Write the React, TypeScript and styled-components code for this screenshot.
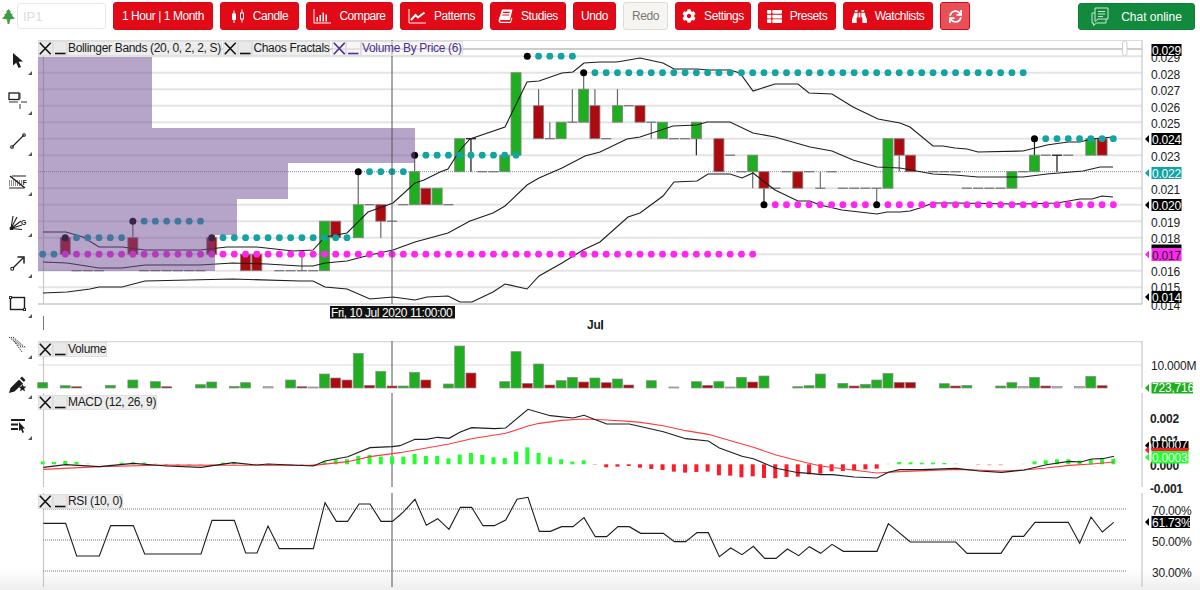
import React from "react";
import styled, { createGlobalStyle } from "styled-components";
import { FaBinoculars, FaCog, FaSync, FaThList } from "react-icons/fa";

const GlobalStyle = createGlobalStyle`
  html, body {
    margin: 0;
    padding: 0;
    height: 590px;
    overflow: hidden;
    font-family: "Liberation Sans", Arial, sans-serif;
    background: linear-gradient(to bottom, #fff 568px, #eeeeee 590px);
  }
`;

const Page = styled.div`
  width: 1200px;
  height: 590px;
  display: flex;
  flex-direction: column;
`;

const Toolbar = styled.div`
  height: 40px;
  box-sizing: border-box;
  padding: 2px 5px 0 2px;
  display: flex;
  align-items: flex-start;
  gap: 7px;
`;

const Logo = styled.svg`
  width: 13px;
  height: 15px;
  margin: 7px -5px 0 0;
`;

const SymbolInput = styled.input`
  width: 89px;
  height: 26px;
  margin-top: 1px;
  box-sizing: border-box;
  border: 1px solid #e9e9e9;
  border-radius: 3px;
  padding: 0 5px;
  font: 13px "Liberation Sans", Arial, sans-serif;
  outline: none;
  &::placeholder {
    color: #dcdcdc;
  }
`;

const Button = styled.button<{ $w: number; $off?: boolean; $soft?: boolean }>`
  width: ${(p) => p.$w}px;
  height: 28px;
  box-sizing: border-box;
  padding: 0;
  border-radius: 3px;
  border: 1px solid ${(p) => (p.$off ? "#dcdcd8" : "#d40a16")};
  background: ${(p) => (p.$off ? "#f6f5f1" : p.$soft ? "#ea5058" : "#e20a16")};
  color: ${(p) => (p.$off ? "#777" : "#fff")};
  font: 12px "Liberation Sans", Arial, sans-serif;
  letter-spacing: -0.45px;
  display: flex;
  align-items: center;
  justify-content: center;
  gap: 8px;
  svg {
    flex: none;
  }
`;

const ChatButton = styled.button`
  width: 117px;
  height: 27px;
  margin-left: auto;
  margin-top: 1px;
  box-sizing: border-box;
  padding: 0;
  border-radius: 3px;
  border: 1px solid #0f7f38;
  background: #118a3e;
  color: #fff;
  font: 12px "Liberation Sans", Arial, sans-serif;
  display: flex;
  align-items: center;
  justify-content: center;
  gap: 9px;
`;

const Body = styled.div`
  display: flex;
  flex: 1;
`;

const Rail = styled.div`
  width: 38px;
  flex: none;
  display: flex;
  flex-direction: column;
`;

const Tool = styled.div`
  height: 40.6px;
  box-sizing: border-box;
  padding-right: 3px;
  position: relative;
  display: flex;
  align-items: center;
  justify-content: center;
  color: #1c1c1c;
`;

const Corner = styled.span`
  position: absolute;
  right: 6px;
  bottom: 6px;
  width: 0;
  height: 0;
  border-left: 4px solid transparent;
  border-bottom: 4px solid #555;
`;

const Charts = styled.div`
  flex: 1;
  display: flex;
  flex-direction: column;
`;

const Panel = styled.div<{ $h: number }>`
  height: ${(p) => p.$h}px;
  position: relative;
`;

const ChartSvg = styled.svg`
  display: block;
  overflow: visible;
`;

const Legend = styled.div<{ $top: number }>`
  position: absolute;
  left: 0;
  top: ${(p) => p.$top}px;
  display: flex;
  height: 15px;
`;

const LegendButton = styled.span<{ $faint?: boolean }>`
  width: 14.5px;
  height: 15px;
  box-sizing: border-box;
  border: 1px solid #dedede;
  background: ${(p) => (p.$faint ? "rgba(240,240,240,.6)" : "#e9e9e9")};
  display: block;
  svg {
    display: block;
  }
`;

const LegendLabel = styled.span<{ $purple?: boolean }>`
  height: 15px;
  box-sizing: border-box;
  border: 1px solid #e0e0e0;
  padding: 0;
  background: ${(p) => (p.$purple ? "rgba(240,240,240,.45)" : "rgba(234,234,234,.85)")};
  color: ${(p) => (p.$purple ? "#4e2f8f" : "#1a1a1a")};
  font-size: 12px;
  line-height: 13px;
  letter-spacing: -0.33px;
  white-space: nowrap;
  margin-right: 1.5px;
`;

const AxisText = styled.text<{ $bold?: boolean }>`
  font-family: "Liberation Sans", Arial, sans-serif;
  font-size: 12px;
  font-weight: ${(p) => (p.$bold ? 700 : 400)};
  letter-spacing: -0.2px;
  fill: #222;
`;

const FlagText = styled.text<{ $tight?: boolean; $dark?: boolean }>`
  font-family: "Liberation Sans", Arial, sans-serif;
  font-size: 12px;
  letter-spacing: ${(p) => (p.$tight ? "-0.42px" : "-0.2px")};
  fill: ${(p) => (p.$dark ? "#222" : "#fff")};
`;

const X0 = 42.7;
const STEP = 11.27;
const cx = (i: number) => X0 + STEP * i;
const py = (t: number) => 72.7 + (28 - t) * 16.5;
const range = (a: number, b: number) => Array.from({ length: b - a + 1 }, (_, k) => a + k);
const pts = (list: number[][]) => list.map((p) => p.join(",")).join(" ");
const zoomed = (ox: number, oy: number, list: number[][]) =>
  list.map(([a, b]) => [ox + a / 3, oy + b / 3]);

const GREEN = "#1fae1f";
const RED = "#ad0a10";
const TEAL = "#12a3a3";
const MAGENTA = "#ff26f0";
const GRID = "#e4e4e4";
const EDGE = "#c8c8c8";

type Candle = { i: number; top: number; bot: number; hi?: number; lo?: number; dark?: boolean };

const greens: Candle[] = [
  { i: 25, top: 19, bot: 16 },
  { i: 28, top: 20, bot: 18, hi: 22 },
  { i: 33, top: 22, bot: 20, hi: 23 },
  { i: 35, top: 21, bot: 20 },
  { i: 37, top: 24, bot: 22 },
  { i: 41, top: 23, bot: 22 },
  { i: 42, top: 28, bot: 23 },
  { i: 46, top: 25, bot: 24 },
  { i: 48, top: 27, bot: 25, hi: 28 },
  { i: 51, top: 26, bot: 25, hi: 27 },
  { i: 55, top: 25, bot: 24 },
  { i: 58, top: 25, bot: 24, lo: 23, dark: true },
  { i: 63, top: 23, bot: 22, lo: 21 },
  { i: 75, top: 24, bot: 21 },
  { i: 86, top: 22, bot: 21 },
  { i: 88, top: 23, bot: 22, hi: 24, dark: true },
  { i: 93, top: 24, bot: 23 },
];

const reds: Candle[] = [
  { i: 2, top: 18, bot: 17 },
  { i: 8, top: 18, bot: 17, hi: 19 },
  { i: 15, top: 18, bot: 17 },
  { i: 18, top: 17, bot: 16 },
  { i: 19, top: 17, bot: 16 },
  { i: 26, top: 19, bot: 18 },
  { i: 30, top: 20, bot: 19, lo: 18 },
  { i: 34, top: 21, bot: 20 },
  { i: 44, top: 26, bot: 24, hi: 27 },
  { i: 49, top: 26, bot: 24, hi: 27 },
  { i: 53, top: 26, bot: 25 },
  { i: 60, top: 24, bot: 22 },
  { i: 64, top: 22, bot: 21, lo: 20, dark: true },
  { i: 67, top: 22, bot: 21 },
  { i: 76, top: 24, bot: 23, lo: 22 },
  { i: 77, top: 23, bot: 22 },
  { i: 94, top: 24, bot: 23 },
];

// [index, level, wick end level]
const dashes: number[][] = [
  [3, 16], [4, 16], [5, 16], [9, 16], [10, 16], [11, 16], [12, 16], [13, 16], [14, 16],
  [21, 16], [22, 16], [23, 16, 17], [24, 16], [29, 20], [31, 19], [32, 20], [36, 20],
  [38, 24, 22], [39, 22], [40, 22], [45, 24, 25], [47, 25, 27], [50, 24], [52, 26],
  [54, 25, 24], [56, 24], [57, 24], [61, 23], [62, 22], [65, 21], [66, 22], [68, 22],
  [69, 21, 22], [70, 22], [71, 21], [72, 21], [73, 21], [74, 21, 20], [79, 22], [80, 22],
  [81, 22], [82, 21], [83, 21], [84, 21], [85, 21], [87, 22], [89, 23], [90, 23, 22], [91, 23],
];

const tealDots: [number, number, number][] = [
  [0, 1, 17], [3, 7, 18], [9, 14, 19], [16, 27, 18], [29, 32, 22], [34, 42, 23],
  [44, 47, 29], [49, 87, 28], [89, 95, 24],
];
const magentaDots: [number, number, number][] = [
  [2, 63, 17], [65, 73, 20], [75, 95, 20],
];
const blackDots = [
  [2, 18], [8, 19], [15, 18], [28, 22], [33, 23], [43, 29], [48, 28], [88, 24], [64, 20], [74, 20],
];

const upperBand = [
  [43, 232], [54, 232], [66, 232], [83, 237], [99, 247], [122, 247], [145, 250], [200, 250],
  [227, 247], [257, 247], [293, 251], [313, 250], [325, 237], [347, 233], [368, 212], [393, 203],
  [415, 183], [424, 180], [440, 172], [448, 169], [460, 150], [470, 139], [505, 127], [527, 82],
  [539, 81], [562, 73], [573, 72], [584, 63], [600, 62], [617, 62], [640, 58], [663, 63], [674, 69],
  [697, 69], [708, 70], [730, 70], [740, 73], [753, 91], [775, 84], [798, 84], [809, 93], [832, 94],
  [853, 107], [878, 119], [900, 123], [910, 127], [933, 146], [943, 146], [955, 148], [967, 149],
  [978, 152], [1023, 151], [1047, 145], [1068, 142], [1080, 142], [1091, 139], [1113, 137],
];
const middleBand = [
  [43, 262], [67, 263], [99, 268], [122, 268], [145, 265], [200, 265], [233, 263], [267, 264],
  [300, 266], [313, 266], [325, 263], [347, 261], [370, 255], [393, 250], [415, 242], [448, 233],
  [470, 221], [493, 213], [505, 206], [527, 185], [539, 178], [562, 168], [585, 156], [600, 152],
  [627, 139], [640, 137], [673, 126], [697, 125], [707, 122], [730, 122], [753, 133], [775, 137],
  [810, 147], [832, 151], [853, 160], [877, 167], [900, 168], [933, 174], [955, 175], [978, 177],
  [1023, 177], [1047, 174], [1083, 171], [1100, 167], [1113, 167],
];
const lowerBand = [
  [43, 293], [67, 292], [90, 289], [99, 287], [122, 287], [145, 281], [233, 279], [300, 281],
  [313, 281], [325, 287], [347, 289], [370, 299], [393, 297], [415, 300], [427, 297], [448, 296],
  [460, 302], [472, 302], [493, 292], [505, 284], [527, 289], [539, 276], [562, 263], [583, 250],
  [600, 242], [628, 217], [640, 213], [663, 196], [674, 182], [697, 181], [708, 174], [730, 174],
  [742, 178], [753, 173], [775, 190], [798, 201], [810, 201], [820, 205], [842, 210], [877, 214],
  [887, 212], [900, 212], [910, 211], [920, 208], [933, 203], [955, 203], [1023, 204], [1057, 203],
  [1080, 199], [1092, 199], [1102, 196], [1113, 197],
];

const axisLevels = [
  [0.029, 62], [0.028, 79], [0.027, 95], [0.026, 112], [0.025, 128], [0.023, 161], [0.021, 194],
  [0.019, 227], [0.018, 243], [0.016, 276], [0.015, 292], [0.014, 310],
];

function Flag({ y, label, bg, h = 12, width = 30, tip = true, dark }: {
  y: number; label: string; bg: string; h?: number; width?: number; tip?: boolean; dark?: boolean;
}) {
  return (
    <g>
      {tip && <polygon points={`1145,${y + h / 2} 1149,${y + h / 2 - 4} 1149,${y + h / 2 + 4}`} fill={bg} />}
      <rect x={1151.5} y={y} width={width} height={h} fill={bg} />
      <FlagText x={1152} y={y + h - 1.5} $dark={dark}>{label}</FlagText>
    </g>
  );
}

function MainChart() {
  const candle = (c: Candle, fill: string) => (
    <g key={c.i}>
      {c.hi && <line x1={cx(c.i)} x2={cx(c.i)} y1={py(c.hi)} y2={py(c.top)} stroke={c.dark ? "#222" : "#666"} strokeWidth="1.2" />}
      {c.lo && <line x1={cx(c.i)} x2={cx(c.i)} y1={py(c.bot)} y2={py(c.lo)} stroke={c.dark ? "#222" : "#666"} strokeWidth="1.2" />}
      <rect x={cx(c.i) - 5} y={py(c.top)} width={10} height={py(c.bot) - py(c.top)} fill={fill} stroke="#808080" strokeWidth="0.8" />
    </g>
  );
  return (
    <ChartSvg width={1162} height={301} viewBox="38 40 1162 301">
      <line x1={38} x2={1142} y1={40.5} y2={40.5} stroke="#dcdcdc" />
      <line x1={38} x2={1142} y1={49} y2={49} stroke="#bdbdbd" strokeWidth="1.6" />
      {range(15, 29).filter((t) => t !== 22).map((t) => (
        <line key={t} x1={38} x2={1142} y1={py(t)} y2={py(t)} stroke={GRID} strokeWidth="2" />
      ))}
      <line x1={38} x2={1142} y1={py(22)} y2={py(22)} stroke="#8a8a8a" strokeDasharray="1 1" />
      <line x1={38} x2={1142} y1={304} y2={304} stroke={EDGE} strokeWidth="1.5" />
      <line x1={1142} x2={1142} y1={40} y2={304} stroke={EDGE} strokeWidth="1.2" />
      <line x1={43.5} x2={43.5} y1={56} y2={304} stroke={EDGE} strokeWidth="1.2" />
      <rect x={1122.5} y={41} width={4.5} height={14.5} rx={2} fill="#fff" stroke="#cfcfcf" />

      {dashes.map(([i, t, w]) => (
        <g key={i} stroke={i === 38 || i === 90 ? "#111" : "#707070"} strokeWidth="1.2">
          <line x1={cx(i) - 5} x2={cx(i) + 5} y1={py(t)} y2={py(t)} />
          {w && <line x1={cx(i)} x2={cx(i)} y1={py(t)} y2={py(w)} />}
        </g>
      ))}
      {greens.map((c) => candle(c, GREEN))}
      {reds.map((c) => candle(c, RED))}

      {[upperBand, middleBand, lowerBand].map((b, k) => (
        <polyline key={k} points={pts(b)} fill="none" stroke="#1d1d1d" strokeWidth="1.1" />
      ))}

      {tealDots.flatMap(([a, b, t]) =>
        range(a, b).map((i) => <circle key={`t${t}${i}`} cx={cx(i)} cy={py(t)} r={3.4} fill={TEAL} />)
      )}
      {magentaDots.flatMap(([a, b, t]) =>
        range(a, b).map((i) => <circle key={`m${t}${i}`} cx={cx(i)} cy={py(t)} r={3.4} fill={MAGENTA} />)
      )}
      {blackDots.map(([i, t]) => <circle key={i} cx={cx(i)} cy={py(t)} r={3.5} fill="#000" />)}

      <polygon
        points="38,57 152,57 152,128 415,128 415,163 288,163 288,199 237,199 237,235 215,235 215,271 38,271"
        fill="#6f4b93"
        opacity="0.5"
      />
      <line x1={392} x2={392} y1={40} y2={304} stroke="#555" />

      {axisLevels.map(([v, y]) => (
        <AxisText key={v} x={1151} y={y}>{v.toFixed(3)}</AxisText>
      ))}
      <Flag y={44} label="0.029" bg="#000" tip={false} />
      <Flag y={133} label="0.024" bg="#000" />
      <Flag y={167} label="0.022" bg={TEAL} />
      <Flag y={199} label="0.020" bg="#000" />
      <rect x={1151.5} y={244.5} width={30} height={4} fill="#000" />
      <Flag y={248} label="0.017" bg={MAGENTA} h={13} dark />
      <Flag y={291} label="0.014" bg="#000" />

      <rect x={330} y={306} width={125} height={12.5} fill="#111" />
      <FlagText x={331} y={316.5} $tight>Fri, 10 Jul 2020 11:00:00</FlagText>
      <line x1={43.5} x2={43.5} y1={316} y2={330} stroke="#777" />
      <line x1={602} x2={602} y1={320} y2={330} stroke="#333" />
      <AxisText x={587} y={329} $bold>Jul</AxisText>
    </ChartSvg>
  );
}

// [index, top in 3x crop px from y=330, kind]
const volumeBars: [number, number, string][] = [
  [0, 158, "g"], [2, 167, "g"], [3, 170, "r"], [6, 166, "g"], [8, 150, "g"], [10, 155, "g"], [11, 170, "r"],
  [14, 164, "g"], [15, 156, "g"], [17, 169, "g"], [18, 158, "g"], [20, 170, "l"], [22, 150, "g"], [23, 170, "r"],
  [24, 171, "l"], [25, 132, "g"], [26, 144, "r"], [27, 150, "r"], [28, 70, "g"], [29, 166, "r"], [30, 124, "g"],
  [31, 168, "r"], [32, 168, "g"], [33, 127, "g"], [34, 150, "r"], [36, 162, "g"], [37, 48, "g"], [38, 129, "r"],
  [41, 155, "g"], [42, 65, "g"], [43, 160, "r"], [44, 102, "g"], [45, 165, "r"], [46, 152, "g"], [47, 142, "g"],
  [48, 156, "r"], [49, 144, "g"], [50, 158, "r"], [51, 147, "g"], [52, 165, "r"], [54, 152, "g"], [56, 171, "l"],
  [58, 155, "g"], [59, 166, "r"], [60, 155, "g"], [61, 171, "l"], [62, 142, "g"], [63, 156, "r"], [64, 138, "g"],
  [67, 170, "g"], [68, 167, "g"], [69, 132, "g"], [71, 160, "g"], [72, 168, "r"], [73, 163, "g"], [74, 150, "g"],
  [75, 130, "g"], [76, 157, "r"], [77, 157, "r"], [80, 161, "g"], [81, 168, "r"], [82, 166, "g"], [85, 168, "g"],
  [86, 158, "g"], [87, 169, "l"], [88, 142, "g"], [89, 168, "r"], [90, 169, "l"], [92, 169, "l"], [93, 139, "g"],
  [94, 167, "r"],
];

function VolumeChart() {
  const fill: Record<string, string> = { g: GREEN, r: RED, l: "#d0b8b8" };
  return (
    <ChartSvg width={1162} height={52} viewBox="38 341 1162 52">
      <line x1={38} x2={1142} y1={341.7} y2={341.7} stroke="#d8d8d8" strokeWidth="1.2" />
      <line x1={38} x2={1142} y1={365} y2={365} stroke="#dcdcdc" strokeWidth="1.2" />
      <line x1={43.5} x2={43.5} y1={341} y2={388} stroke={EDGE} strokeWidth="1.2" />
      <line x1={392} x2={392} y1={341} y2={388} stroke="#555" />
      <line x1={1142} x2={1142} y1={341} y2={388} stroke={EDGE} strokeWidth="1.2" />
      {volumeBars.map(([i, t, k]) => (
        <rect
          key={i}
          x={cx(i) - 5}
          y={330 + t / 3}
          width={10}
          height={388 - (330 + t / 3)}
          fill={fill[k]}
          stroke="#8d8d8d"
          strokeWidth="0.7"
        />
      ))}
      <AxisText x={1151} y={370}>10.000M</AxisText>
      <Flag y={382.5} label="723,716" bg={GREEN} h={11} width={41.5} />
    </ChartSvg>
  );
}

const histogram = [
  8, 7, 10, 7, 3, 1, 1, 5, 6, 5, 3, -3, -3, -3, -3, -2, 5, 7, 3, 2, 2, 1, -2, -2, -3, 8, 15, 15, 25, 28, 23, 23,
  23, 31, 25, 25, 18, 29, 34, 28, 21, 19, 38, 51, 34, 21, 15, 8, 12, -2, -9, -7, -5, -10, -14, -17, -22, -25, -23,
  -22, -33, -34, -39, -36, -41, -42, -38, -37, -30, -28, -21, -20, -18, -15, -13, 2, 7, 6, 5, 5, 4, 3, 0, -2, -3,
  -3, 0, 2, 9, 12, 15, 15, 11, 15, 15, 17,
];

const macdLine = [
  ...zoomed(0, 330, [[130, 412], [197, 404], [298, 410], [400, 400], [500, 408], [603, 412], [700, 398], [770, 405], [805, 402], [940, 408], [975, 393], [1043, 380], [1110, 353], [1177, 350]]),
  ...zoomed(400, 330, [[0, 347], [45, 328], [79, 328], [113, 322], [147, 325], [181, 306], [215, 293], [283, 296], [317, 294], [384, 238], [451, 257], [519, 264], [552, 256], [620, 282], [688, 282], [790, 305], [857, 326], [925, 333], [958, 354], [1026, 379], [1060, 386], [1128, 415], [1195, 428]]),
  ...zoomed(800, 330, [[30, 430], [63, 434], [97, 434], [163, 441], [231, 444], [265, 427], [299, 419], [367, 419], [469, 415], [537, 423], [605, 427], [672, 420], [739, 404], [807, 394], [842, 396], [875, 387], [908, 386], [942, 379]]),
];
const signalLine = [
  ...zoomed(0, 330, [[130, 418], [298, 410], [500, 405], [940, 406], [1043, 395], [1110, 380]]),
  ...zoomed(400, 330, [[0, 368], [147, 342], [215, 326], [317, 310], [384, 288], [418, 280], [485, 271], [552, 267], [620, 270], [688, 274], [722, 277], [790, 287], [857, 302], [925, 313], [992, 332], [1060, 352], [1128, 375], [1195, 392]]),
  ...zoomed(800, 330, [[62, 408], [231, 429], [299, 425], [469, 418], [605, 423], [672, 420], [739, 414], [807, 406], [875, 402], [942, 396]]),
];

function MacdChart() {
  const base = 464.3;
  return (
    <ChartSvg width={1162} height={97} viewBox="38 393 1162 97">
      <line x1={43.5} x2={43.5} y1={393} y2={487} stroke={EDGE} strokeWidth="1.2" />
      <line x1={392} x2={392} y1={393} y2={487} stroke="#555" />
      <line x1={1142} x2={1142} y1={393} y2={487} stroke={EDGE} strokeWidth="1.2" />
      {histogram.map((v, i) =>
        v === 0 ? null : (
          <rect
            key={i}
            x={cx(i) - 2}
            y={v > 0 ? base - v / 3 : base}
            width={4}
            height={Math.abs(v) / 3}
            fill={v > 0 ? "#22ff2e" : "#ff1a2a"}
            opacity={Math.abs(v) <= 3 ? 0.45 : 1}
          />
        )
      )}
      <polyline points={pts(signalLine)} fill="none" stroke="#ff3b3b" strokeWidth="1.1" />
      <polyline points={pts(macdLine)} fill="none" stroke="#1d1d1d" strokeWidth="1.1" />

      <AxisText x={1150} y={423} $bold>0.002</AxisText>
      <AxisText x={1150} y={470} $bold>0.000</AxisText>
      <AxisText x={1150} y={493} $bold>-0.001</AxisText>
      <AxisText x={1150} y={445} $bold>0.001</AxisText>
      <Flag y={441} label="0.0007" bg="#000" h={9} width={37} />
      <rect x={1151.5} y={448} width={37} height={3.5} fill="#ff1a2a" />
      <polygon points="1145,450 1149,446 1149,454" fill="#ff1a2a" />
      <Flag y={451} label="0.0003" bg="#22ff2e" h={12.5} width={37} />
    </ChartSvg>
  );
}

const rsiLine = [
  ...zoomed(0, 330, [[130, 580], [197, 580], [230, 678], [298, 678], [332, 587], [400, 587], [434, 672], [603, 672], [636, 571], [703, 571], [737, 669], [771, 669], [804, 588], [838, 656], [940, 656], [975, 518], [1009, 574], [1043, 574], [1077, 522], [1110, 522], [1143, 574], [1177, 574]]),
  ...zoomed(400, 330, [[0, 555], [11, 545], [45, 508], [79, 586], [113, 566], [147, 598], [181, 532], [215, 532], [249, 587], [283, 587], [317, 570], [351, 508], [384, 502], [418, 604], [451, 604], [485, 590], [519, 590], [552, 563], [586, 620], [620, 620], [654, 590], [688, 590], [722, 610], [790, 610], [823, 635], [857, 635], [891, 608], [925, 608], [958, 680], [992, 654], [1026, 674], [1060, 649], [1094, 685], [1128, 685], [1162, 657], [1196, 677]]),
  ...zoomed(800, 330, [[28, 650], [62, 670], [96, 643], [130, 664], [231, 664], [265, 581], [331, 636], [467, 636], [501, 670], [603, 670], [637, 619], [671, 619], [705, 577], [805, 577], [839, 640], [873, 561], [907, 606], [941, 577]]),
];

function RsiChart() {
  return (
    <ChartSvg width={1162} height={100} viewBox="38 490 1162 100">
      <line x1={43.5} x2={43.5} y1={493} y2={587} stroke={EDGE} strokeWidth="1.2" />
      <line x1={392} x2={392} y1={493} y2={587} stroke="#555" />
      <line x1={1142} x2={1142} y1={493} y2={587} stroke={EDGE} strokeWidth="1.2" />
      {[509, 540, 571].map((y) => (
        <line key={y} x1={43} x2={1126} y1={y} y2={y} stroke="#777" strokeDasharray="1 1" />
      ))}
      <polyline points={pts(rsiLine)} fill="none" stroke="#1d1d1d" strokeWidth="1.1" />
      <AxisText x={1152} y={515}>70.00%</AxisText>
      <AxisText x={1152} y={546}>50.00%</AxisText>
      <AxisText x={1152} y={577}>30.00%</AxisText>
      <Flag y={516} label="61.73%" bg="#000" width={38.5} />
    </ChartSvg>
  );
}

function CloseGlyph({ color }: { color: string }) {
  return (
    <svg width="12.5" height="13" viewBox="0 0 12.5 13">
      <path d="M0.8 0.8 L11.7 12.2 M11.7 0.8 L0.8 12.2" stroke={color} strokeWidth="1.6" />
    </svg>
  );
}

function MinGlyph({ color }: { color: string }) {
  return (
    <svg width="12.5" height="13" viewBox="0 0 12.5 13">
      <path d="M1 11.5 H11.5" stroke={color} strokeWidth="1.6" />
    </svg>
  );
}

function LegendItem({ label, purple }: { label: string; purple?: boolean }) {
  const color = purple ? "#4e2f8f" : "#111";
  return (
    <>
      <LegendButton $faint={purple}><CloseGlyph color={color} /></LegendButton>
      <LegendButton $faint={purple}><MinGlyph color={color} /></LegendButton>
      <LegendLabel $purple={purple}>{label}</LegendLabel>
    </>
  );
}

const icon = { fill: "none", stroke: "currentColor", strokeWidth: 1.1 };

const toolIcons = [
  <svg key="a" width="16" height="17" viewBox="0 0 16 17"><path d="M3 1 L3 13.6 L6.2 10.8 L8.6 16 L11 15 L8.6 9.8 L13 9.4 Z" fill="currentColor" /></svg>,
  <svg key="b" width="20" height="18" viewBox="0 0 20 18" {...icon}><rect x="1" y="1" width="10" height="6.5" strokeWidth="1.3" /><path d="M1 10 H10 M13 10 H19 M12 1 V7 M12 12 V17" strokeWidth="0.9" /></svg>,
  <svg key="c" width="16" height="16" viewBox="0 0 16 16" {...icon}><path d="M2.5 13.5 L13.5 2.5" /><circle cx="2" cy="14" r="1.3" /><circle cx="14" cy="2" r="1.3" /></svg>,
  <svg key="d" width="20" height="14" viewBox="0 0 20 14" {...icon}><path d="M4 1 H18 M1 13 H16" /><path d="M1 6 H14 M1 8 H14 M1 10 H14" strokeDasharray="1 1" /><path d="M2 1 L17 13" strokeWidth="1.5" /><text x="14.5" y="10" fontSize="7" fontWeight="700" fill="currentColor" stroke="none" fontFamily="Liberation Sans">F</text></svg>,
  <svg key="e" width="18" height="15" viewBox="0 0 18 15" {...icon}><path d="M2 13.5 L4 1 M2 13.5 L8 2 M2 13.5 L12 6 M2 13.5 L13 10 M2 13.5 L13 14.5" /><circle cx="2.5" cy="13.5" r="1.4" fill="currentColor" /><text x="12" y="10" fontSize="7" fontWeight="700" fill="currentColor" stroke="none" fontFamily="Liberation Sans">G</text></svg>,
  <svg key="f" width="15" height="15" viewBox="0 0 15 15" {...icon}><path d="M3 12 L13.5 1.5" strokeWidth="1.3" /><path d="M7.5 1 H14 V7.5" strokeWidth="1.5" /><circle cx="2.2" cy="12.8" r="1.5" /></svg>,
  <svg key="g" width="17" height="15" viewBox="0 0 17 15" {...icon}><rect x="1.5" y="1.5" width="14" height="12" strokeWidth="1.4" /><circle cx="1.5" cy="1.5" r="1.2" fill="#fff" /><circle cx="15.5" cy="13.5" r="1.2" fill="#fff" /></svg>,
  <svg key="h" width="19" height="17" viewBox="0 0 19 17" {...icon}><path d="M1 1 L14 12 M3 1 L16 12 M5 1 L18 12 M6 5 L14 16" strokeDasharray="1.4 1" strokeWidth="0.9" /></svg>,
  <svg key="i" width="20" height="18" viewBox="0 0 20 18" fill="currentColor"><path d="M1 17 L2.5 12 L11 3.5 L15 7.5 L6.5 15.5 Z M12 2.5 L14 0.6 L17.4 4 L16 6 Z" /><path d="M14.5 8 L15.6 10.6 L18.4 10.8 L16.2 12.6 L17 15.4 L14.5 13.8 L12 15.4 L12.8 12.6 L10.6 10.8 L13.4 10.6 Z" /></svg>,
  <svg key="j" width="16" height="15" viewBox="0 0 16 15" fill="currentColor"><path d="M1 1 H15 V3 H1 Z M1 5.5 H8 V7.5 H1 Z M1 10 H8 V12 H1 Z" /><path d="M9 4 L9 13 L11 11.4 L12.5 15 L14 14.2 L12.6 10.8 L15 10.4 Z" /></svg>,
];

export default function App() {
  return (
    <Page>
      <GlobalStyle />
      <Toolbar>
        <Logo viewBox="0 0 13 15">
          <path d="M6.5 0 L9 3 L8 3.4 L11 6 L9.8 6.4 L13 9.6 L8 10.4 L7.4 15 L5.6 15 L5 10.4 L0 9.6 L3.2 6.4 L2 6 L5 3.4 L4 3 Z" fill="#3f9d46" />
        </Logo>
        <SymbolInput placeholder="IP1" />
        <Button $w={100}>1 Hour | 1 Month</Button>
        <Button $w={79}>
          <svg width="14" height="15" viewBox="0 0 14 15" fill="#fff">
            <path d="M2.5 1.5 H3.5 V4.5 H5 V11 H3.5 V14 H2.5 V11 H1 V4.5 H2.5 Z" />
            <path d="M10.5 0.5 H11.5 V3.5 H13 V10.5 H11.5 V13.5 H10.5 V10.5 H9 V3.5 H10.5 Z M10 4.5 V9.5 H12 V4.5 Z" />
          </svg>
          Candle
        </Button>
        <Button $w={87}>
          <svg width="18" height="15" viewBox="0 0 18 15" fill="#fff">
            <path d="M0.5 0 H1.5 V13.5 H18 V14.5 H0.5 Z" />
            <path d="M3.5 8 H5 V12.5 H3.5 Z M6.5 6 H8 V12.5 H6.5 Z M9.5 3.5 H11 V12.5 H9.5 Z M12.5 5.5 H14 V12.5 H12.5 Z" />
          </svg>
          Compare
        </Button>
        <Button $w={83}>
          <svg width="18" height="15" viewBox="0 0 18 15" fill="none" stroke="#fff">
            <path d="M1 0 V14 H18" strokeWidth="1" />
            <path d="M3 11 L7.5 6 L10 8.5 L16.5 3.5" strokeWidth="2" />
          </svg>
          Patterns
        </Button>
        <Button $w={76}>
          <svg width="15" height="14" viewBox="0 0 15 14" fill="#fff">
            <path d="M4 0.5 H14.5 L12 11 H3 Q1.8 11 2 12 Q2.2 12.8 3.2 12.8 H12.4 L13.5 8.5 L14.4 9 L12.9 14 H2.6 Q0.2 13.6 0.6 11 Z M5.2 2.8 L4.9 4 H11.6 L11.9 2.8 Z M4.5 5.4 L4.2 6.6 H11 L11.3 5.4 Z" fillRule="evenodd" />
          </svg>
          Studies
        </Button>
        <Button $w={43}>Undo</Button>
        <Button $w={45} $off>Redo</Button>
        <Button $w={76}><FaCog size={14} />Settings</Button>
        <Button $w={78}><FaThList size={15} />Presets</Button>
        <Button $w={90}><FaBinoculars size={15} />Watchlists</Button>
        <Button $w={30} $soft><FaSync size={13} /></Button>
        <ChatButton>
          <svg width="21" height="20" viewBox="0 0 21 20" fill="none" stroke="#cfe8d6" strokeWidth="1">
            <path d="M4 1 H17 V12 H7 L4 14.5 Z" />
            <path d="M4 6 H1 V16 H2.5 V18.5 L5.5 16 H15 V12" />
            <path d="M7 4.5 H14 M7 7 H14 M7 9.5 H12" />
          </svg>
          Chat online
        </ChatButton>
      </Toolbar>
      <Body>
        <Rail>
          {toolIcons.map((ic, k) => (
            <Tool key={k}>
              {ic}
              <Corner />
            </Tool>
          ))}
        </Rail>
        <Charts>
          <Panel $h={301}>
            <MainChart />
            <Legend $top={1}>
              <LegendItem label="Bollinger Bands (20, 0, 2, 2, S)" />
              <LegendItem label="Chaos Fractals" />
              <LegendItem label="Volume By Price (6)" purple />
            </Legend>
          </Panel>
          <Panel $h={52}>
            <VolumeChart />
            <Legend $top={1}>
              <LegendItem label="Volume" />
            </Legend>
          </Panel>
          <Panel $h={97}>
            <MacdChart />
            <Legend $top={2}>
              <LegendItem label="MACD (12, 26, 9)" />
            </Legend>
          </Panel>
          <Panel $h={100}>
            <RsiChart />
            <Legend $top={4}>
              <LegendItem label="RSI (10, 0)" />
            </Legend>
          </Panel>
        </Charts>
      </Body>
    </Page>
  );
}
